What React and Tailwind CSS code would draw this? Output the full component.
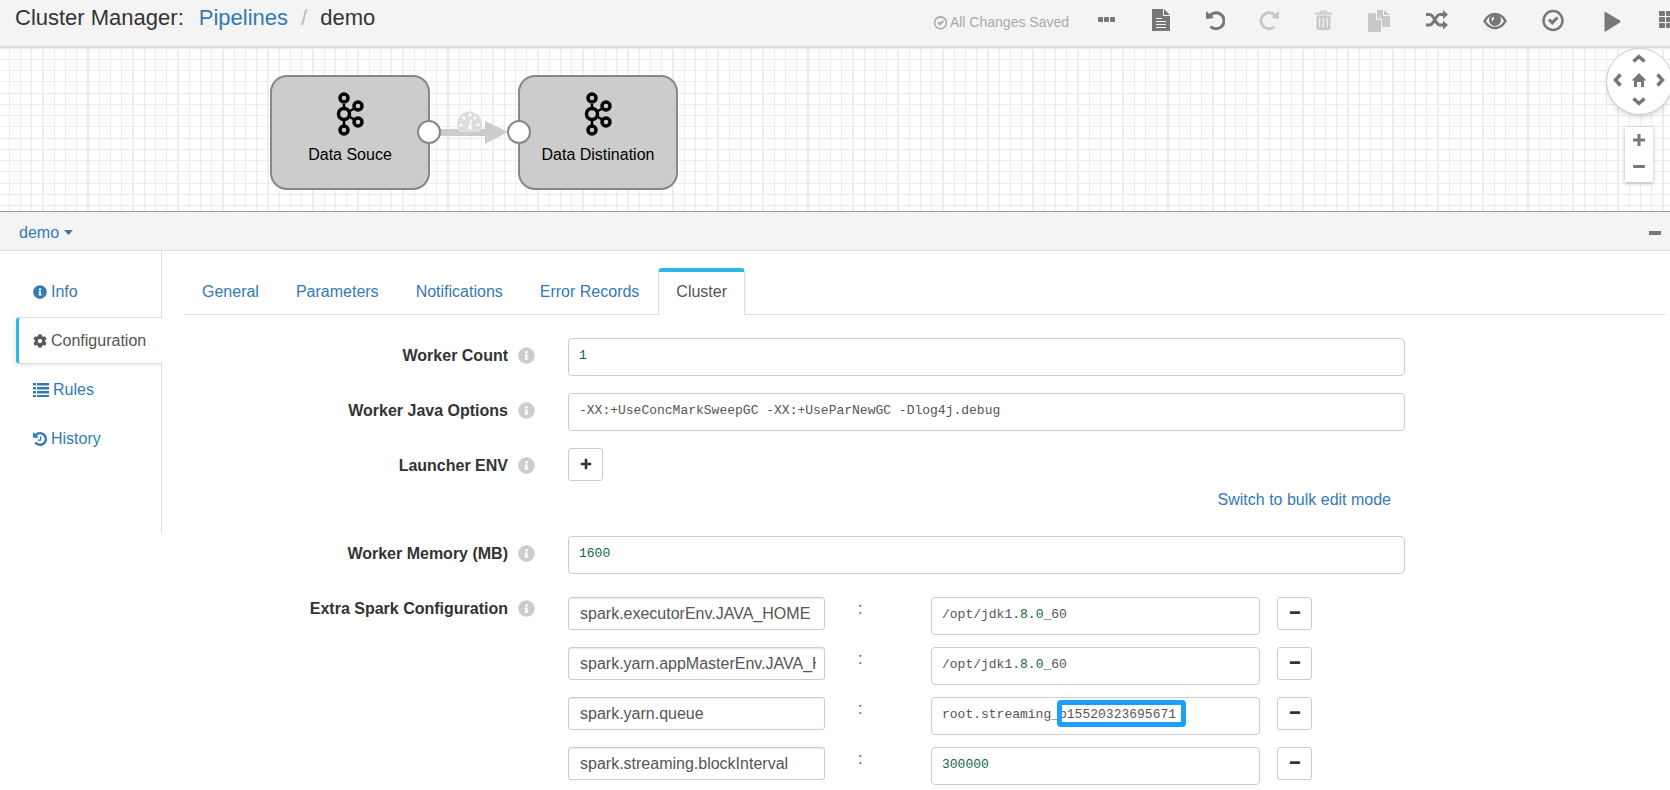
import { useState } from "react";
import { FaCog, FaInfoCircle } from "react-icons/fa";

const HISTORY_ARROW =
  "M1664 896q0 156-61 298t-164 245-245 164-298 61q-172 0-327-72.5t-264-204.5q-7-10-6.5-22.5t8.5-20.5l137-138q10-9 25-9 16 2 23 12 73 95 179 147t225 52q104 0 198.5-40.5t163.5-109.5 109.5-163.5 40.5-198.5-40.5-198.5-109.5-163.5-163.5-109.5-198.5-40.5q-98 0-188 35.5t-160 101.5l137 138q31 30 14 69-17 40-59 40h-448q-26 0-45-19t-19-45v-448q0-42 40-59 39-17 69 14l130 129q107-101 244.5-156.5t284.5-55.5q156 0 298 61t245 164 164 245 61 298z";
const CLOCK_HANDS =
  "M1024 608v448q0 14-9 23t-23 9h-320q-14 0-23-9t-9-23v-64q0-14 9-23t23-9h224v-352q0-14 9-23t23-9h64q14 0 23 9t9 23z";

function Icon({ className, viewBox = "0 0 24 24", children }) {
  return (
    <svg className={className} viewBox={viewBox} fill="currentColor" aria-hidden="true">
      {children}
    </svg>
  );
}

function CheckCircle({ className }) {
  return (
    <Icon className={className}>
      <circle cx="12" cy="12.500" r="9.500" fill="none" stroke="currentColor" strokeWidth="2.500" />
      <path d="M7 12.500l2-2 2.300 2L15.500 8.500l2 2-6.200 6.500z" />
    </Icon>
  );
}

function UndoArrow() {
  return (
    <>
      <path
        d="M5.500 18.500A8 8 0 1 0 5 7.500"
        fill="none"
        stroke="currentColor"
        strokeWidth="3"
      />
      <path d="M1 4q0-1 1-.3L8.500 9.300q.5.700-.5.800L2 11q-1 0-1-1z" />
    </>
  );
}

const small = "h-6 w-5";
const large = "h-6 w-6";

const actions = [
  {
    label: "More",
    icon: (
      <Icon className={small} viewBox="0 0 20 24">
        <rect x="1" y="9" width="5" height="5" rx="1" />
        <rect x="7" y="9" width="5" height="5" rx="1" />
        <rect x="13" y="9" width="5" height="5" rx="1" />
      </Icon>
    ),
  },
  {
    label: "Notes",
    icon: (
      <Icon className={small} viewBox="0 0 20 24">
        <path
          fillRule="evenodd"
          d="M1 1h11v7h7v15H1zM5 10v1h6v-1zM5 13v1h10v-1zM5 16v1h10v-1zM5 19v1h10v-1z"
        />
        <path d="M13 1l6 6h-6z" />
      </Icon>
    ),
  },
  {
    label: "Undo",
    icon: (
      <Icon className={small} viewBox="0 0 20 24">
        <UndoArrow />
      </Icon>
    ),
  },
  {
    label: "Redo",
    disabled: true,
    icon: (
      <Icon className={small} viewBox="0 0 20 24">
        <g transform="matrix(-1 0 0 1 21 0)">
          <UndoArrow />
        </g>
      </Icon>
    ),
  },
  {
    label: "Delete",
    disabled: true,
    icon: (
      <Icon className={small} viewBox="0 0 20 24">
        <path d="M7 3.500Q7 2.500 8 2.500h5Q14 2.500 14 3.500V4.500h5v2H2v-2h5zM8.500 4.500h4v-.5h-4z" fillRule="evenodd" />
        <path
          fillRule="evenodd"
          d="M3.500 7.500h14V20Q17.500 22 15.500 22h-10Q3.500 22 3.500 20zM6 9.500v10h1.300v-10zM9.800 9.500v10h1.300v-10zM13.600 9.500v10h1.300v-10z"
        />
      </Icon>
    ),
  },
  {
    label: "Duplicate",
    disabled: true,
    icon: (
      <Icon className={large}>
        <path d="M10 2h6v6h7v11h-8V11l-5-5z" />
        <path d="M17 2l6 5h-6z" />
        <path d="M1 5h8v7h5v12H1z" />
        <path d="M10 6l4 5h-4z" />
      </Icon>
    ),
  },
  {
    label: "Auto Arrange",
    icon: (
      <Icon className={large}>
        <path
          d="M1 6.500h3.500C9.500 6.500 10 17 15 17h4M1 17h3.500C9.500 17 10 6.500 15 6.500h4"
          fill="none"
          stroke="currentColor"
          strokeWidth="3"
        />
        <path d="M18 2l5 4.500-5 4.500zM18 12.500l5 4.500-5 4.500z" />
      </Icon>
    ),
  },
  {
    label: "Preview",
    icon: (
      <Icon className={large}>
        <path
          d="M2 13C4.500 8.500 8 6 12.500 6S20.500 8.500 23 13C20.500 17.500 17 20 12.500 20S4.500 17.500 2 13z"
          transform="translate(-.5 0)"
          fill="none"
          stroke="currentColor"
          strokeWidth="2.500"
        />
        <path fillRule="evenodd" d="M12 6a6 6 0 1 1 0 12a6 6 0 0 1 0-12zM11 8.500a3.500 3.500 0 0 0-2 5l2-2.500z" />
      </Icon>
    ),
  },
  {
    label: "Validate",
    icon: <CheckCircle className={large} />,
  },
  {
    label: "Start",
    icon: (
      <Icon className={large}>
        <path d="M5.500 4.500Q5.500 3.500 6.500 4L21 12.500Q22 13.500 21 14.500L6.500 23.500Q5.500 24 5.500 23z" />
      </Icon>
    ),
  },
  {
    label: "Stage Library",
    icon: (
      <Icon className={large}>
        {[2, 8, 14].map((y) =>
          [2, 9, 16].map((x) => (
            <rect key={`${x}-${y}`} x={x} y={y + 1} width="6" height="5" rx="1" />
          ))
        )}
      </Icon>
    ),
  },
];

function Header() {
  return (
    <header className="flex h-12 items-start justify-between overflow-hidden border-b-2 border-[#ddd] bg-[#f4f4f4]">
      <h1 className="flex items-center pt-1 pl-[15px] text-[22px] leading-7 whitespace-nowrap">
        Cluster Manager:
        <a href="#pipelines" className="ml-[15px] text-[#337ab7]">
          Pipelines
        </a>
        <span className="mx-[13px] text-[#bbb]">/</span>
        demo
      </h1>
      <div className="-mr-[28px] flex shrink-0 items-start pt-2">
        <p className="mr-[11px] flex items-center gap-[2px] pt-1 text-[14px] leading-5 text-[#aaa]">
          <CheckCircle className="size-[15px]" />
          All Changes Saved
        </p>
        {actions.map((action) => (
          <button
            key={action.label}
            type="button"
            aria-label={action.label}
            disabled={action.disabled}
            className="px-[17px] text-[#777] disabled:text-[#c9c9c9]"
          >
            {action.icon}
          </button>
        ))}
      </div>
    </header>
  );
}

function Stage({ x, name }) {
  return (
    <g transform={`translate(${x} 28)`}>
      <rect width="158" height="113" rx="16" fill="#ccc" stroke="#888" strokeWidth="2" />
      <g fill="none" stroke="#000" strokeWidth="3.500">
        <path d="M73 28v4M73 44v6M79 35l5-3M79 41l5 3" strokeWidth="2.500" />
        <circle cx="73" cy="22" r="4" />
        <circle cx="73" cy="38" r="5.500" />
        <circle cx="73" cy="54" r="4" />
        <circle cx="87" cy="30" r="4" />
        <circle cx="87" cy="46" r="4" />
      </g>
      <text x="79" y="84" textAnchor="middle" fontSize="16" fill="#000">
        {name}
      </text>
    </g>
  );
}

function PipelineCanvas() {
  return (
    <section className="relative h-[163px] overflow-hidden bg-white" aria-label="Pipeline canvas">
      <svg className="block h-full w-full">
        <defs>
          <pattern id="grid" x="42" y="45" width="45" height="45" patternUnits="userSpaceOnUse">
            <path
              d="M0 0h2v45H0zM12 0h1v45h-1zM23 0h1v45h-1zM34 0h1v45h-1zM0 0h45v1H0zM0 11h45v1H0zM0 22h45v1H0zM0 33h45v1H0z"
              fill="#ededed"
            />
          </pattern>
        </defs>
        <rect width="100%" height="100%" fill="url(#grid)" />
        <Stage x={271} name="Data Souce" />
        <Stage x={519} name="Data Distination" />
        <path d="M440 81h45v-8l23 11-23 12v-8h-45z" fill="#ccc" />
        <path d="M459 84q-2-4-2-8a12 12 0 0 1 25 0q0 4-2 8z" fill="#ddd" />
        <g fill="#fff">
          <circle cx="461" cy="77" r="1.500" />
          <circle cx="464" cy="70" r="1.500" />
          <circle cx="470" cy="67" r="1.500" />
          <circle cx="475" cy="70" r="1.500" />
          <circle cx="478" cy="77" r="1.500" />
          <path d="M471 71l1 .5-1 6a2 2 0 1 1-2 0z" />
        </g>
        <g fill="#fff" stroke="#888" strokeWidth="2">
          <circle cx="429" cy="84" r="11" />
          <circle cx="519" cy="84" r="11" />
        </g>
      </svg>

      <div className="absolute top-0 -right-[3px] grid size-[67px] grid-cols-3 grid-rows-3 place-items-center rounded-full border border-[#ccc] bg-white pr-[2px] pb-[3px] text-[#777] shadow-md">
        <button type="button" aria-label="Pan up" className="col-start-2">
          <Chevron className="size-4" />
        </button>
        <button type="button" aria-label="Pan left" className="col-start-1 row-start-2">
          <Chevron className="size-4 -rotate-90" />
        </button>
        <button type="button" aria-label="Home" className="col-start-2 row-start-2">
          <Icon className="size-4" viewBox="0 0 16 16">
            <path d="M8 1l7.500 7.500H13V15h-3v-5H6v5H3V8.500H.5z" />
          </Icon>
        </button>
        <button type="button" aria-label="Pan right" className="col-start-3 row-start-2">
          <Chevron className="size-4 rotate-90" />
        </button>
        <button type="button" aria-label="Pan down" className="col-start-2 row-start-3">
          <Chevron className="size-4 rotate-180" />
        </button>
      </div>
      <div className="absolute top-[79px] right-[17px] flex h-[55px] w-7 flex-col items-center justify-between bg-white pt-[5px] pb-[7px] text-[#777] shadow-[0_1px_4px_rgba(0,0,0,0.3)]">
        <button type="button" aria-label="Zoom in">
          <Plus className="size-4" />
        </button>
        <button type="button" aria-label="Zoom out">
          <Minus className="size-4" />
        </button>
      </div>
    </section>
  );
}

function Chevron({ className }) {
  return (
    <Icon className={className} viewBox="0 0 16 16">
      <path d="M2.500 10.500L8 5.500l5.500 5" fill="none" stroke="currentColor" strokeWidth="3.500" />
    </Icon>
  );
}

function Plus({ className }) {
  return (
    <Icon className={className} viewBox="0 0 16 16">
      <path d="M2 6.500h4.500V2h3v4.500H14v3H9.500V14h-3V9.500H2z" />
    </Icon>
  );
}

function Minus({ className }) {
  return (
    <Icon className={className} viewBox="0 0 16 16">
      <rect x="2" y="6" width="12" height="3" rx="1" />
    </Icon>
  );
}

function DetailBar() {
  return (
    <div className="flex h-10 items-center justify-between border-t border-b border-t-[#999] border-b-[#ddd] bg-[#f4f4f4] pt-[3px] pr-[9px] pl-[19px]">
      <button type="button" className="flex items-center gap-[5px] text-[#337ab7]">
        demo
        <Icon className="h-[5px] w-[9px]" viewBox="0 0 9 5">
          <path d="M0 0h9L4.500 5z" />
        </Icon>
      </button>
      <button type="button" aria-label="Minimize" className="text-[#777]">
        <Icon className="h-4 w-3" viewBox="0 0 12 16">
          <rect y="6" width="12" height="4" />
        </Icon>
      </button>
    </div>
  );
}

const navItems = [
  { label: "Info", icon: <FaInfoCircle className="size-[14px]" /> },
  { label: "Configuration", icon: <FaCog className="size-[14px]" />, active: true },
  {
    label: "Rules",
    icon: (
      <Icon className="h-[14px] w-4" viewBox="0 0 16 14">
        <path d="M0 0h3v2.500H0zM4 0h12v2.500H4zM0 4h3v2.500H0zM4 4h12v2.500H4zM0 8h3v2.500H0zM4 8h12v2.500H4zM0 12h3v2H0zM4 12h12v2H4z" />
      </Icon>
    ),
  },
  {
    label: "History",
    icon: (
      <Icon className="size-[14px]" viewBox="128 128 1536 1536">
        <path d={HISTORY_ARROW} />
        <path d={CLOCK_HANDS} />
      </Icon>
    ),
  },
];

function SideNav() {
  return (
    <nav className="flex h-[282px] w-[162px] shrink-0 flex-col gap-[2px] border-r border-[#ddd] pt-[17px] pl-4">
      {navItems.map((item) => (
        <a
          key={item.label}
          href={`#${item.label.toLowerCase()}`}
          className={
            item.active
              ? "-mr-px flex h-[47px] items-center gap-1 rounded-l-sm border-y border-l-3 border-y-[#ddd] border-l-[#2cb8e8] bg-white pl-[14px] text-[#555] shadow-[-2px_2px_4px_rgba(0,0,0,0.08)]"
              : "flex h-[47px] items-center gap-1 pl-[17px] text-[#337ab7]"
          }
        >
          {item.icon}
          {item.label}
        </a>
      ))}
    </nav>
  );
}

const tabs = ["General", "Parameters", "Notifications", "Error Records", "Cluster"];

function Tabs({ current, onSelect }) {
  return (
    <div role="tablist" className="flex h-[47px] gap-px border-b border-[#ddd]">
      {tabs.map((tab) => (
        <button
          key={tab}
          type="button"
          role="tab"
          aria-selected={tab === current}
          onClick={() => onSelect(tab)}
          className={
            tab === current
              ? "-mb-px rounded-t-sm border-x border-t-4 border-x-[#ddd] border-t-[#2cb8e8] bg-white px-[17px] pb-1 text-[#555]"
              : "border-x border-transparent px-[17px] pt-px text-[#337ab7]"
          }
        >
          {tab}
        </button>
      ))}
    </div>
  );
}

function Field({ id, label, children }) {
  return (
    <div className="grid grid-cols-[384fr_837fr_260fr]">
      <div className="flex h-[34px] items-center justify-end gap-[10px] pr-[33px] font-bold whitespace-nowrap">
        <label htmlFor={id} className="pt-[2px]">
          {label}
        </label>
        <FaInfoCircle className="size-[17px] text-[#ccc]" />
      </div>
      <div>{children}</div>
    </div>
  );
}

const codeBox =
  "block h-[38px] w-full rounded-[4px] border border-[#ccc] bg-white px-[10px] pb-[3px] font-['Liberation_Mono',monospace] text-[13px] outline-none";
const iconButton =
  "flex h-[33px] w-[35px] items-center justify-center rounded-[3px] border border-[#ccc] bg-white pb-[2px] text-[#333]";

function NumberBox({ id, label, defaultValue }) {
  return (
    <input
      id={id}
      aria-label={label}
      defaultValue={defaultValue}
      className={`${codeBox} text-[#116644]`}
    />
  );
}

// Colours the version suffix; the input on top only supplies the caret.
function VersionBox({ label, defaultValue }) {
  const [value, setValue] = useState(defaultValue);
  const parts = value.split(/(\.\d+)/);
  return (
    <div className="relative">
      <div className={`${codeBox} flex items-center whitespace-pre text-[#555]`} aria-hidden="true">
        {parts.map((part, i) => (
          <span key={i} className={i % 2 ? "text-[#116644]" : ""}>
            {part}
          </span>
        ))}
      </div>
      <input
        aria-label={label}
        value={value}
        onChange={(e) => setValue(e.target.value)}
        className="absolute inset-0 w-full bg-transparent px-[11px] pb-[3px] font-['Liberation_Mono',monospace] text-[13px] text-transparent caret-[#555] outline-none"
      />
    </div>
  );
}

const sparkConfig = [
  { key: "spark.executorEnv.JAVA_HOME", value: "/opt/jdk1.8.0_60", kind: "version" },
  { key: "spark.yarn.appMasterEnv.JAVA_HOME", value: "/opt/jdk1.8.0_60", kind: "version" },
  { key: "spark.yarn.queue", value: "root.streaming_p15520323695671", kind: "text" },
  { key: "spark.streaming.blockInterval", value: "300000", kind: "number" },
];

function SparkRow({ row }) {
  const label = `${row.key} value`;
  return (
    <div className="grid grid-cols-[257fr_106fr_329fr_145fr] items-start">
      <input
        aria-label="Property name"
        defaultValue={row.key}
        className="h-[33px] w-full rounded-[3px] border border-[#ccc] pr-2 pl-[11px] text-[#555] shadow-[inset_0_1px_1px_rgba(0,0,0,0.08)] outline-none"
      />
      <span className="pt-[2px] pl-[33px] leading-5 text-[#555]">:</span>
      {row.kind === "version" && <VersionBox label={label} defaultValue={row.value} />}
      {row.kind === "number" && <NumberBox label={label} defaultValue={row.value} />}
      {row.kind === "text" && (
        <div className="relative">
          <input aria-label={label} defaultValue={row.value} className={`${codeBox} text-[#555]`} />
          <span className="pointer-events-none absolute top-[3px] left-[126px] h-[27px] w-[129px] rounded-[4px] border-5 border-[#1e9fff]" />
        </div>
      )}
      <button type="button" aria-label={`Remove ${row.key}`} className={`${iconButton} ml-[17px]`}>
        <Minus className="size-[14px]" />
      </button>
    </div>
  );
}

function ClusterForm() {
  return (
    <form className="flex flex-col gap-[17px] pt-[23px]">
      <Field id="worker-count" label="Worker Count">
        <NumberBox id="worker-count" defaultValue="1" />
      </Field>
      <Field id="java-options" label="Worker Java Options">
        <input
          id="java-options"
          defaultValue="-XX:+UseConcMarkSweepGC -XX:+UseParNewGC -Dlog4j.debug"
          className={`${codeBox} text-[#555]`}
        />
      </Field>
      <Field id="launcher-env" label="Launcher ENV">
        <button id="launcher-env" type="button" className={iconButton}>
          <Plus className="size-[14px]" />
        </button>
        <div className="mt-[9px] mb-[9px] pr-[14px] text-right leading-5">
          <a href="#bulk-edit" className="text-[#337ab7]">
            Switch to bulk edit mode
          </a>
        </div>
      </Field>
      <Field id="worker-memory" label="Worker Memory (MB)">
        <NumberBox id="worker-memory" defaultValue="1600" />
      </Field>
      <Field label="Extra Spark Configuration">
        <div className="mt-[6px] flex flex-col gap-3">
          {sparkConfig.map((row) => (
            <SparkRow key={row.key} row={row} />
          ))}
        </div>
      </Field>
    </form>
  );
}

export default function App() {
  const [tab, setTab] = useState("Cluster");

  return (
    <div className="h-screen overflow-hidden bg-white font-['Liberation_Sans',Arial,sans-serif] text-[16px] text-[#333]">
      <Header />
      <PipelineCanvas />
      <DetailBar />
      <div className="flex items-start">
        <SideNav />
        <main className="min-w-0 flex-1 pt-[17px] pr-[5px] pl-[22px]">
          <Tabs current={tab} onSelect={setTab} />
          <ClusterForm />
        </main>
      </div>
    </div>
  );
}
